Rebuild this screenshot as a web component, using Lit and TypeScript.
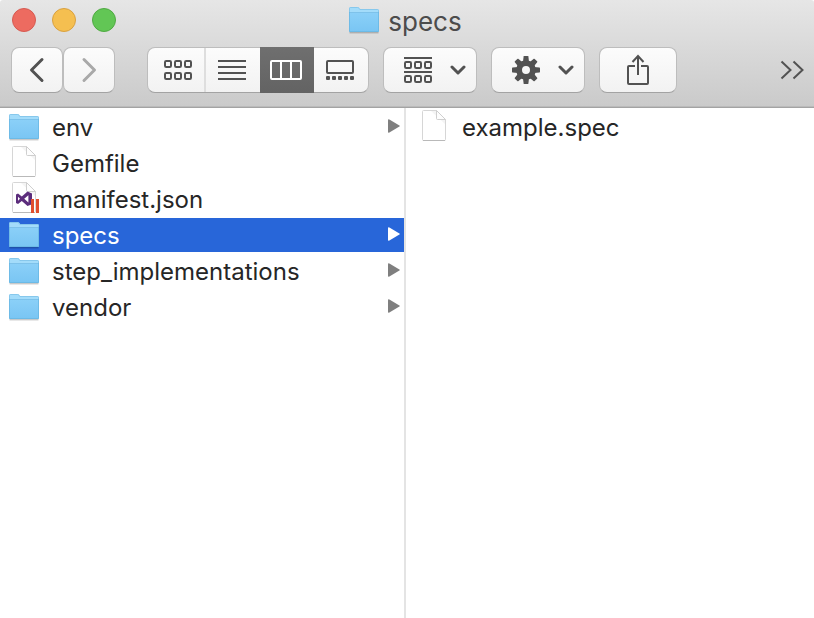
import { LitElement, html, svg, css, nothing } from "lit";
import { customElement, property, state } from "lit/decorators.js";
import { classMap } from "lit/directives/class-map.js";

type Kind = "folder" | "file" | "json";
interface Entry {
  name: string;
  kind: Kind;
}

const COLUMNS: Entry[][] = [
  [
    { name: "env", kind: "folder" },
    { name: "Gemfile", kind: "file" },
    { name: "manifest.json", kind: "json" },
    { name: "specs", kind: "folder" },
    { name: "step_implementations", kind: "folder" },
    { name: "vendor", kind: "folder" },
  ],
  [{ name: "example.spec", kind: "file" }],
];

const squares = (y: number) =>
  [1, 11, 21].map((x) => svg`<rect x=${x} y=${y} width="6" height="6" rx="1.2" />`);

const stroked = (w: number, h: number, body: unknown) => html`
  <svg class="line" width=${w} height=${h} viewBox="0 0 ${w} ${h}" aria-hidden="true">${body}</svg>
`;

const chevronDown = stroked(16, 12, svg`<path class="round" d="M2 3L8 9L14 3" />`);

const gearTeeth = [0, 45, 90, 135, 180, 225, 270, 315].map(
  (a) => svg`<path transform="rotate(${a} 14 14)" d="M11.6 0.6Q11.7 0 12.3 0H15.7Q16.3 0 16.4 0.6L17 6H11Z" />`
);

const gear = html`
  <svg class="solid" width="28" height="28" viewBox="0 0 28 28" aria-hidden="true">
    ${gearTeeth}
    <path fill-rule="evenodd" d="M14 4.2a9.8 9.8 0 1 0 0 19.6a9.8 9.8 0 1 0 0-19.6ZM14 10a4 4 0 1 1 0 8a4 4 0 1 1 0-8Z" />
  </svg>
`;

const VIEWS = [
  { label: "Icons", icon: stroked(28, 20, svg`${squares(1)}${squares(13)}`) },
  { label: "List", icon: stroked(28, 20, svg`<path d="M0 1H28M0 7H28M0 13H28M0 19H28" />`) },
  {
    label: "Columns",
    icon: stroked(32, 20, svg`<rect x="1" y="1" width="30" height="18" rx="1" /><path d="M11 1V19M21 1V19" />`),
  },
  {
    label: "Gallery",
    icon: stroked(
      28,
      20,
      svg`<rect x="1" y="1" width="26" height="12" rx="1" />
        ${[0, 6, 12, 18, 24].map((x) => svg`<rect class="dot" x=${x} y="16" width="4" height="4" rx="1" />`)}`
    ),
  },
];

@customElement("file-icon")
export class FileIcon extends LitElement {
  @property() kind: Kind = "file";

  static styles = css`
    :host {
      display: block;
      width: 32px;
      height: 34px;
      flex: none;
    }
    svg {
      display: block;
    }
  `;

  private folder() {
    return svg`
      <defs>
        <linearGradient id="front" x1="0" y1="0" x2="0" y2="1">
          <stop offset="0" stop-color="#8bd0f8" />
          <stop offset="1" stop-color="#79c5f3" />
        </linearGradient>
      </defs>
      <path d="M1.5 29.8H30.5" stroke="#000" stroke-opacity=".3" />
      <path d="M1 28V5.5Q1 4 2.5 4H9.5Q10.8 4 11.5 5L12.2 6H29.5Q31 6 31 7.5V28Z" fill="#a3dcfa" />
      <path d="M1.5 9V5.5Q1.5 4.5 2.5 4.5H9.5Q10.5 4.5 11.2 5.5L11.9 6.5H29.5Q30.5 6.5 30.5 7.5V9" fill="none" stroke="#7fc3e8" stroke-opacity=".8" />
      <path d="M1 9H31V28Q31 29 30 29H2Q1 29 1 28Z" fill="url(#front)" />
      <path d="M1 9.5H31" stroke="#7ec2ea" />
      <path d="M1.5 9V28.5H30.5V9" fill="none" stroke="#68b5e2" stroke-opacity=".75" />
    `;
  }

  private sheet() {
    return svg`
      <path d="M4.5 1.5Q4.5 .5 5.5 .5H18.5L27.5 9.5V29.5Q27.5 30.5 26.5 30.5H5.5Q4.5 30.5 4.5 29.5Z" fill="#fff" stroke="#d6d6d6" />
      <path d="M5 30.5H27" stroke="#b9b9b9" />
      <path d="M13 1H18.5L27 9.5V14Z" fill="#f4f4f4" />
      <path d="M18.5 .5V8.5Q18.5 9.5 19.5 9.5H27.5Z" fill="#fdfdfd" stroke="#cfcfcf" />
    `;
  }

  private badge() {
    return svg`
      <path fill="#5c2d7c" fill-rule="evenodd" d="M8 12.6L10 11.6L13.8 14.6L19.5 9.6L24 11.4V22.2L19.5 24L13.8 19L10 22L8 21ZM10 14.8V18.8L12 16.8ZM20.4 13.2V20.4L16.2 16.8Z" />
      <path d="M23 17H26V31H23ZM28 17H31V31H28Z" fill="#e04e2f" />
    `;
  }

  render() {
    return html`
      <svg width="32" height="34" viewBox="0 0 32 34" aria-hidden="true">
        ${this.kind === "folder" ? this.folder() : this.sheet()}
        ${this.kind === "json" ? this.badge() : nothing}
      </svg>
    `;
  }
}

@customElement("app-root")
export class AppRoot extends LitElement {
  @state() private view = 2;
  @state() private selected = "specs";

  static styles = css`
    :host {
      display: flex;
      flex-direction: column;
      min-height: 100vh;
      background: #fff;
      color: #262626;
      font: 24px/32px Inter, "Liberation Sans", sans-serif;
    }
    button {
      margin: 0;
      padding: 0;
      border: 0;
      background: none;
      color: inherit;
      font: inherit;
      display: flex;
      align-items: center;
    }
    svg {
      display: block;
      flex: none;
    }
    ul {
      list-style: none;
      margin: 0;
      padding: 0;
    }
    .line {
      fill: none;
      stroke: currentColor;
      stroke-width: 2;
    }
    .round {
      stroke-width: 3;
      stroke-linecap: round;
      stroke-linejoin: round;
    }
    .solid,
    .dot {
      fill: currentColor;
      stroke: none;
    }
    .chrome {
      background: linear-gradient(#e6e6e6, #cacaca);
      border-bottom: 1px solid #a3a3a3;
      box-shadow: inset 0 -1px #bababa;
      border-radius: 3px 3px 0 0;
      padding-bottom: 14px;
    }
    .titlebar {
      display: grid;
      grid-template-columns: 1fr auto 1fr;
      align-items: center;
      height: 40px;
      padding: 0 16px 0 12px;
    }
    .lights {
      display: flex;
      gap: 16px;
    }
    .light {
      box-sizing: border-box;
      width: 24px;
      height: 24px;
      border-radius: 50%;
      border: 1px solid;
    }
    .close {
      background: #ed6b60;
      border-color: #d65a51;
    }
    .minimize {
      background: #f5bf50;
      border-color: #d9a140;
    }
    .zoom {
      background: #62c655;
      border-color: #50aa43;
    }
    .title {
      display: flex;
      align-items: center;
      gap: 8px;
      margin: 0;
      font-size: 26px;
      font-weight: 400;
      color: #4c4c4c;
    }
    .title span {
      padding-top: 3px;
    }
    .toolbar {
      display: flex;
      align-items: center;
      padding: 7px 10px 0 11px;
      color: #525252;
    }
    .control {
      box-sizing: border-box;
      height: 46px;
      border: 1px solid #bdbdbd;
      border-bottom-color: #a3a3a3;
      border-radius: 8px;
      background: linear-gradient(#fcfcfc, #f2f2f2);
    }
    .nav {
      width: 52px;
      justify-content: center;
    }
    .nav:disabled {
      color: #a9a9a9;
    }
    .views {
      display: flex;
      margin: 0 14px 0 32px;
    }
    .segment {
      box-sizing: border-box;
      width: 54px;
      padding-right: 2px;
      justify-content: center;
    }
    .segment:first-child {
      width: 58px;
      padding: 0 0 0 4px;
      border-right: 2px solid #dedede;
    }
    .segment.on {
      margin: -1px 0;
      background: linear-gradient(#6f6f6f, #636363);
      color: #fff;
    }
    .menu {
      width: 94px;
      padding-left: 20px;
      gap: 18px;
      margin-right: 14px;
    }
    .share {
      width: 78px;
      justify-content: center;
    }
    .more {
      margin-left: auto;
    }
    .browser {
      flex: 1;
      display: grid;
      grid-template-columns: 406fr 408fr;
    }
    .column {
      display: flex;
      flex-direction: column;
      gap: 2px;
      padding-top: 2px;
      min-width: 0;
    }
    .column.first {
      border-right: 2px solid #e4e4e4;
    }
    .row {
      width: 100%;
      gap: 12px;
      padding: 0 4px 0 8px;
      text-align: left;
    }
    .column.last .row {
      padding-left: 12px;
    }
    .row.selected {
      background: #2866d9;
      color: #fff;
    }
    .name {
      flex: 1;
      padding-top: 2px;
    }
    .arrow {
      fill: #7f7f7f;
    }
    .selected .arrow {
      fill: #fff;
    }
  `;

  private row(entry: Entry) {
    const selected = entry.name === this.selected;
    return html`
      <li>
        <button
          class=${classMap({ row: true, selected })}
          aria-pressed=${selected ? "true" : "false"}
          @click=${() => (this.selected = entry.name)}
        >
          <file-icon .kind=${entry.kind}></file-icon>
          <span class="name">${entry.name}</span>
          ${entry.kind === "folder"
            ? html`<svg class="arrow" width="12" height="16" viewBox="0 0 12 16" aria-hidden="true">
                <path d="M0 1.3Q0 -.3 1.4 .5L11.4 6.4Q12.4 7 11.4 7.6L1.4 13.5Q0 14.3 0 12.7Z" />
              </svg>`
            : nothing}
        </button>
      </li>
    `;
  }

  render() {
    return html`
      <header class="chrome">
        <div class="titlebar">
          <div class="lights">
            <button class="light close" aria-label="Close"></button>
            <button class="light minimize" aria-label="Minimize"></button>
            <button class="light zoom" aria-label="Zoom"></button>
          </div>
          <h1 class="title"><file-icon kind="folder"></file-icon><span>specs</span></h1>
        </div>
        <div class="toolbar">
          <button class="control nav" aria-label="Back">
            ${stroked(16, 26, svg`<path class="round" d="M13 2.5L2.5 13L13 23.5" />`)}
          </button>
          <button class="control nav" aria-label="Forward" disabled>
            ${stroked(16, 26, svg`<path class="round" d="M3 2.5L13.5 13L3 23.5" />`)}
          </button>
          <div class="control views" role="group" aria-label="View">
            ${VIEWS.map(
              (v, i) => html`<button
                class=${classMap({ segment: true, on: i === this.view })}
                aria-label=${v.label}
                aria-pressed=${i === this.view ? "true" : "false"}
                @click=${() => (this.view = i)}
              >
                ${v.icon}
              </button>`
            )}
          </div>
          <button class="control menu" aria-label="Group items">
            ${stroked(28, 26, svg`<path d="M0 1H28M0 15H28" />${squares(5)}${squares(19)}`)}${chevronDown}
          </button>
          <button class="control menu" aria-label="Actions">${gear}${chevronDown}</button>
          <button class="control share" aria-label="Share">
            ${stroked(
              24,
              32,
              svg`<path d="M9 12H3Q2 12 2 13V29Q2 30 3 30H21Q22 30 22 29V13Q22 12 21 12H15M12 21V2M6.5 8L12 2L17.5 8" />`
            )}
          </button>
          <button class="more" aria-label="More toolbar items">
            ${stroked(24, 20, svg`<path d="M1.5 1.5L10.5 10L1.5 18.5M13.5 1.5L22.5 10L13.5 18.5" />`)}
          </button>
        </div>
      </header>
      <main class="browser">
        ${COLUMNS.map(
          (entries, i) => html`<ul class=${classMap({ column: true, first: i === 0, last: i === 1 })}>
            ${entries.map((e) => this.row(e))}
          </ul>`
        )}
      </main>
    `;
  }
}
